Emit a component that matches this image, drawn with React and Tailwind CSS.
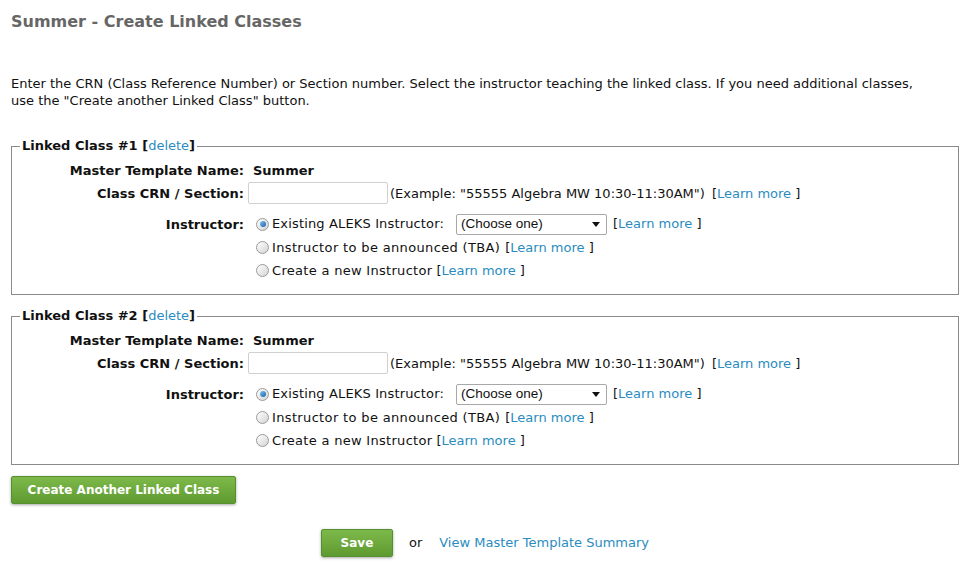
const LINK = "text-[#2a8cc0]";

const Radio = ({ checked }) => (
  <span className="relative inline-block w-[13px] h-[13px] rounded-full border border-[#9a9a9a] bg-gradient-to-br from-[#ffffff] to-[#d4d4d4] shrink-0">
    {checked && (
      <span className="absolute left-[2.5px] top-[2.5px] w-[6px] h-[6px] rounded-full bg-gradient-to-br from-[#7fc6f5] to-[#1a5fa8]" />
    )}
  </span>
);

const LearnMore = () => (
  <span>
    [<span className={LINK}>Learn more </span>]
  </span>
);

const LinkedClass = ({ n }) => (
  <fieldset className="border border-[#8a8a8a] px-[8px] pt-[6px] pb-[12px] m-0 min-w-0">
    <legend className="px-[2px] leading-[16px] font-bold">
      Linked Class #{n} [<span className={`${LINK} font-normal`}>delete</span>]
    </legend>

    <div className="grid grid-cols-[228px_1fr] font-normal">
      {/* master template name */}
      <div className="h-[20px] flex items-center justify-end pr-[4px] pt-[1px] font-bold">Master Template Name:</div>
      <div className="h-[20px] flex items-center pl-[5px] pt-[1px] font-bold">Summer</div>

      {/* crn */}
      <div className="mt-[2px] h-[22px] flex items-center justify-end pr-[4px] pt-[2px] font-bold">Class CRN / Section:</div>
      <div className="mt-[2px] h-[22px] flex items-center">
        <span className="w-[140px] h-[22px] border border-[#d0d0d0] rounded-[2px] bg-white" />
        <span className="ml-[2px] pt-[2px]">(Example: "55555 Algebra MW 10:30-11:30AM")</span>
        <span className="ml-[7px] pt-[2px]"><LearnMore /></span>
      </div>

      {/* instructor */}
      <div className="mt-[8px] h-[24px] flex items-center justify-end pr-[4px] pt-[1px] font-bold">Instructor:</div>
      <div className="mt-[8px] h-[24px] flex items-center pl-[8px]">
        <Radio checked />
        <span className="ml-[3px] tracking-[0.15px]">Existing ALEKS Instructor:</span>
        <span className="ml-[12px] w-[151px] h-[21px] border border-[#a8a8a8] rounded-[2px] bg-white flex items-center justify-between pl-[4px] pr-[6px] font-['Liberation_Sans',Arial,sans-serif] text-[13.5px]">
          (Choose one)
          <svg width="8" height="5" viewBox="0 0 8 5"><path d="M0 0h8L4 5z" fill="#111" /></svg>
        </span>
        <span className="ml-[6px]"><LearnMore /></span>
      </div>

      <div />
      <div className="h-[23px] flex items-center pl-[8px]">
        <Radio />
        <span className="ml-[3px] tracking-[0.35px]">Instructor to be announced (TBA)</span>
        <span className="ml-[5px]"><LearnMore /></span>
      </div>

      <div />
      <div className="h-[23px] flex items-center pl-[8px]">
        <Radio />
        <span className="ml-[3px] tracking-[0.3px]">Create a new Instructor</span>
        <span className="ml-[4px]"><LearnMore /></span>
      </div>
    </div>
  </fieldset>
);

const GreenButton = ({ children, className }) => (
  <button
    className={`h-[28px] rounded-[2px] border border-[#568f30] bg-gradient-to-b from-[#7db94a] to-[#5f9a30] text-white font-bold text-[12px] shadow-[0_1px_3px_rgba(0,0,0,0.35)] ${className}`}
  >
    {children}
  </button>
);

export default function App() {
  return (
    <div className="min-h-[579px] bg-white px-[11px] text-[13px] text-[#111] font-['DejaVu_Sans',Verdana,sans-serif]">
      <h1 className="pt-[12px] leading-[20px] text-[16px] font-bold text-[#666]">
        Summer - Create Linked Classes
      </h1>

      <p className="mt-[43px] leading-[17px] pr-[20px]">
        Enter the CRN (Class Reference Number) or Section number. Select the instructor teaching the linked class. If you need additional classes, use the "Create another Linked Class" button.
      </p>

      <div className="mt-[29px]">
        <LinkedClass n={1} />
      </div>
      <div className="mt-[13px]">
        <LinkedClass n={2} />
      </div>

      <GreenButton className="mt-[11px] w-[225px]">Create Another Linked Class</GreenButton>

      <div className="mt-[25px] flex items-center justify-center">
        <GreenButton className="w-[72px]">Save</GreenButton>
        <span className="ml-[16px]">or</span>
        <span className={`ml-[17px] ${LINK}`}>View Master Template Summary</span>
      </div>
    </div>
  );
}
